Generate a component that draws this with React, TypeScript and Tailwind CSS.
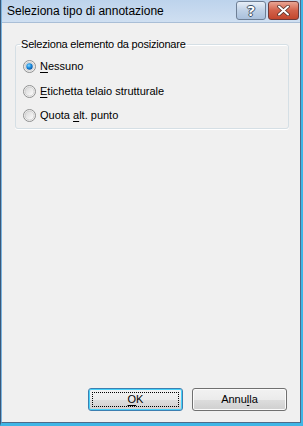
// Windows Vista style dialog - "Seleziona tipo di annotazione"
import { useState } from "react";

const font = { fontFamily: '"Liberation Sans", Arial, sans-serif' };

function Radio({ checked }: { checked: boolean }) {
  return (
    <svg width="13" height="13" viewBox="0 0 13 13" className="shrink-0">
      <defs>
        <linearGradient id={checked ? "rgOn" : "rgOff"} x1="0" y1="0" x2="1" y2="1">
          <stop offset="0" stopColor="#d6d6d6" />
          <stop offset="1" stopColor="#ffffff" />
        </linearGradient>
        <radialGradient id="dot" cx="0.4" cy="0.35" r="0.7">
          <stop offset="0" stopColor="#8ad7ff" />
          <stop offset="0.5" stopColor="#1b8ee0" />
          <stop offset="1" stopColor="#0a4f9c" />
        </radialGradient>
      </defs>
      <circle cx="6.5" cy="6.5" r="6" fill="#f4f4f4" stroke="#8e8f8f" strokeWidth="1" />
      <circle cx="6.5" cy="6.5" r="4.5" fill={`url(#${checked ? "rgOn" : "rgOff"})`} stroke="#c4c4c4" strokeWidth="0.7" />
      {checked && <circle cx="6.5" cy="6.5" r="3.2" fill="url(#dot)" />}
    </svg>
  );
}

function TitleButton({ kind }: { kind: "help" | "close" }) {
  const isClose = kind === "close";
  return (
    <div
      className={
        "flex items-center justify-center h-[19px] rounded-[3px] border " +
        (isClose
          ? "w-[31px] border-[#6d3a3a] bg-gradient-to-b from-[#e8a493] via-[#d2614a] to-[#c3462d]"
          : "w-[30px] border-[#6e7f95] bg-gradient-to-b from-[#e7eef7] via-[#bfd1e6] to-[#a9c0dc]")
      }
    >
      {isClose ? (
        <svg width="13" height="11" viewBox="0 0 13 11">
          <path d="M2 1.5 L11 9.5 M11 1.5 L2 9.5" stroke="#4a2a24" strokeWidth="3.4" strokeLinecap="round" />
          <path d="M2 1.5 L11 9.5 M11 1.5 L2 9.5" stroke="#ffffff" strokeWidth="2" strokeLinecap="round" />
        </svg>
      ) : (
        <span
          className="text-[15px] font-bold leading-none text-white [text-shadow:1px_0_0_#3d4f66,-1px_0_0_#3d4f66,0_1px_0_#3d4f66,0_-1px_0_#3d4f66]"
          style={{ fontFamily: '"Noto Sans", sans-serif' }}
        >
          ?
        </span>
      )}
    </div>
  );
}

function DialogButton({ label, ul, focused }: { label: string; ul: number; focused?: boolean }) {
  return (
    <button
      className={
        "relative w-[95px] h-[23px] rounded-[3px] border text-[11px] text-black bg-[linear-gradient(#f2f2f2_0%,#ebebeb_50%,#dddddd_51%,#cfcfcf_100%)] " +
        (focused ? "border-[#3c7fb1] shadow-[inset_0_0_0_1px_#48d2fa]" : "border-[#707070] shadow-[inset_0_0_0_1px_#fbfbfb]")
      }
      style={font}
    >
      {focused && <span className="absolute inset-[3px] border border-dotted border-black" />}
      <span className="relative">
        {label.slice(0, ul)}
        <span className="underline underline-offset-2">{label[ul]}</span>
        {label.slice(ul + 1)}
      </span>
    </button>
  );
}

function App() {
  const [selected, setSelected] = useState(0);
  const options = [
    { label: "Nessuno", ul: 0 },
    { label: "Etichetta telaio strutturale", ul: 0 },
    { label: "Quota alt. punto", ul: 6 },
  ];

  return (
    <div className="w-[303px] h-[426px] bg-white" style={font}>
      {/* window frame: outer dark/blue edge, inner dark line */}
      <div className="h-full border-l border-r-2 border-b-3 border-l-[#3a5878] border-r-[#3fb6e6] border-b-[#3fb6e6]">
        <div className="flex flex-col h-full border-l border-r border-b border-l-[#7ab4e0] border-r-[#4f6a88] border-b-[#4f6a88]">
          {/* Title bar */}
          <div className="flex items-center justify-between h-[22px] pl-[5px] pr-[1px] bg-gradient-to-b from-[#bdd3ec] to-[#cfdff1]">
            <span className="text-[12px] text-black">Seleziona tipo di annotazione</span>
            <div className="flex gap-[2px] self-start mt-[1px]">
              <TitleButton kind="help" />
              <TitleButton kind="close" />
            </div>
          </div>

          {/* Client area */}
          <div className="flex flex-col flex-1 bg-[#f0f0f0] border-t border-[#a9bed6] px-[13px] pb-[11px] pt-[13px]">
            <fieldset className="h-[93px] mr-[-2px] rounded-[3px] border border-[#d5dfe5] shadow-[0_1px_0_#ffffff,inset_0_1px_0_#ffffff] px-[7px] pt-[5px]">
              <legend className="px-[1px] ml-[-3px] text-[11px] tracking-[-0.2px] text-black">
                Seleziona elemento da posizionare
              </legend>
              <div className="flex flex-col gap-[6.5px]">
                {options.map((o, i) => (
                  <label
                    key={o.label}
                    className="flex items-center gap-[4px] h-[18px] text-[11px] text-black"
                    onClick={() => setSelected(i)}
                  >
                    <Radio checked={selected === i} />
                    <span>
                      {o.label.slice(0, o.ul)}
                      <span className="underline underline-offset-2">{o.label[o.ul]}</span>
                      {o.label.slice(o.ul + 1)}
                    </span>
                  </label>
                ))}
              </div>
            </fieldset>

            <div className="flex-1" />

            <div className="flex justify-end gap-[9px]">
              <DialogButton label="OK" ul={0} focused />
              <DialogButton label="Annulla" ul={4} />
            </div>
          </div>
        </div>
      </div>
    </div>
  );
}

export default App;
